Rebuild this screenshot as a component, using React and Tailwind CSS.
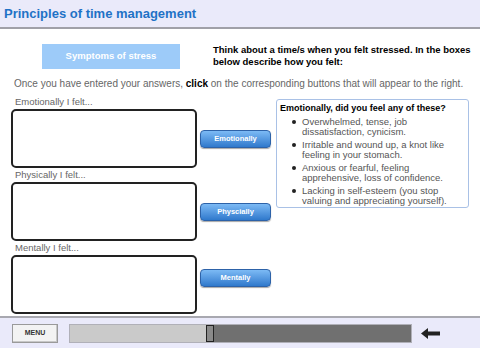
import React from 'react';

const font = { fontFamily: '"Liberation Sans", Arial, sans-serif' };

function FeltRow({ label, button, btnTop }) {
  return (
    <div>
      <p className="h-[14px] pl-[4px] text-[9.5px] leading-[14px] text-[#666]">{label}</p>
      <div className="flex items-start">
        <div className="w-[186px] h-[59px] rounded-[5px] border-2 border-[#222] bg-white" />
        <button
          className={`ml-[3px] w-[71px] h-[18px] rounded-[4px] border border-[#2d62a8] bg-gradient-to-b from-[#7cbaf5] to-[#2f79cc] text-white text-[7.5px] font-bold shadow-[0_1px_1px_rgba(0,0,0,0.35)] ${btnTop}`}
        >
          {button}
        </button>
      </div>
    </div>
  );
}

const symptoms = [
  ['Overwhelmed, tense, job', 'dissatisfaction, cynicism.'],
  ['Irritable and wound up, a knot like', 'feeling in your stomach.'],
  ['Anxious or fearful, feeling', 'apprehensive, loss of confidence.'],
  ['Lacking in self-esteem (you stop', 'valuing and appreciating yourself).'],
];

export default function App() {
  return (
    <div className="w-[480px] h-[348px] flex flex-col bg-white overflow-hidden" style={font}>
      {/* Header */}
      <div className="h-[29px] shrink-0 bg-[#eaeafa] border-b-2 border-[#a0a0a8] flex items-center pl-[4px]">
        <h1 className="text-[13px] font-bold text-[#1f72c6]">Principles of time management</h1>
      </div>

      {/* Body */}
      <div className="flex-1">
        <div className="flex pt-[15px]">
          <div className="ml-[42px] w-[138px] h-[25px] bg-[#9dcbf9] flex items-center justify-center text-white text-[9.5px] font-bold">
            Symptoms of stress
          </div>
          <p className="ml-[33px] text-[9.5px] leading-[12px] font-bold text-black">
            Think about a time/s when you felt stressed. In the boxes
            <br />
            below describe how you felt:
          </p>
        </div>

        <p className="ml-[14px] mt-[9px] text-[10px] leading-[12px] text-[#666]">
          Once you have entered your answers, <b className="text-black">click</b> on the corresponding buttons that will appear to the right.
        </p>

        <div className="flex ml-[11px] mt-[5px]">
          <div className="w-[265px] flex flex-col">
            <FeltRow label="Emotionally I felt..." button="Emotionally" btnTop="mt-[21px]" />
            <FeltRow label="Physically I felt..." button="Physcially" btnTop="mt-[21px]" />
            <FeltRow label="Mentally I felt..." button="Mentally" btnTop="mt-[14px]" />
          </div>

          <div className="mt-[4px] w-[193px] h-[109px] rounded-[3px] border border-[#a9c1e6] pl-[3px] pt-[2px] self-start">
            <p className="text-[9px] leading-[12px] font-bold text-black">Emotionally, did you feel any of these?</p>
            <ul className="mt-[3px] flex flex-col gap-[3px]">
              {symptoms.map((s, i) => (
                <li key={i} className="flex text-[9.5px] leading-[10px] text-[#555]">
                  <span className="w-[22px] shrink-0 flex justify-end pr-[6px] pt-[3px]">
                    <span className="w-[4px] h-[4px] rounded-full bg-[#222]" />
                  </span>
                  <span>
                    {s[0]}
                    <br />
                    {s[1]}
                  </span>
                </li>
              ))}
            </ul>
          </div>
        </div>
      </div>

      {/* Footer */}
      <div className="h-[32px] shrink-0 bg-[#eaeafa] border-t-2 border-[#a8a8b0] flex items-center pl-[12px]">
        <button className="w-[46px] h-[19px] bg-[#f3f3f3] border border-[#9a9a9a] shadow-[inset_-1px_-1px_0_#c8c8c8] text-[7px] font-bold text-[#333]">
          MENU
        </button>
        <div className="ml-[11px] w-[343px] h-[19px] border border-[#b0b0b8] flex">
          <div className="w-[136px] bg-[#cacaca]" />
          <div className="w-[8px] bg-[#8a8a8a] border border-[#222]" />
          <div className="flex-1 bg-[#707070]" />
        </div>
        <svg className="ml-[9px]" width="19" height="11" viewBox="0 0 19 11">
          <path d="M0 5.5 L7 0 L7 3.5 L19 3.5 L19 7.5 L7 7.5 L7 11 Z" fill="#222" />
        </svg>
      </div>
    </div>
  );
}
